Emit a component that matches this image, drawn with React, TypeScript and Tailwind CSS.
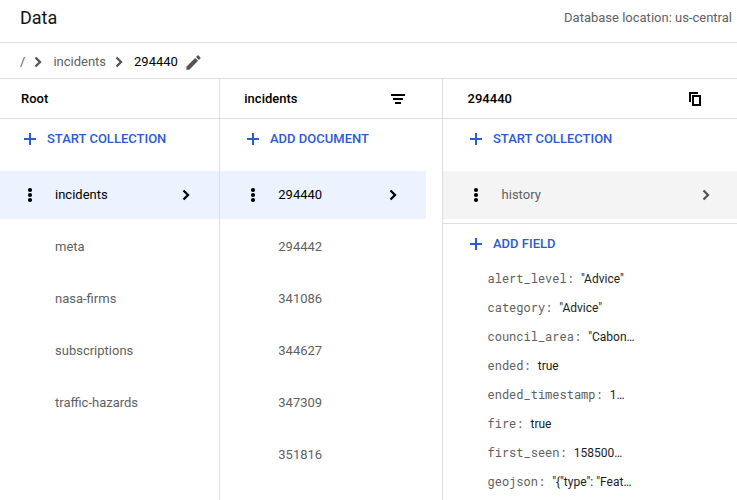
import React from "react";

type IconProps = { className?: string };

const Chevron = ({ className = "" }: IconProps) => (
  <svg viewBox="0 0 20 20" className={`size-5 shrink-0 ${className}`} fill="none" stroke="currentColor" strokeWidth="2.3">
    <path d="M7.5 5.5 12 10l-4.5 4.5" />
  </svg>
);

const Plus = () => (
  <svg viewBox="0 0 20 20" className="size-5 shrink-0" fill="currentColor" shapeRendering="crispEdges">
    <path d="M4 9h5V4h2v5h5v2h-5v5H9v-5H4z" />
  </svg>
);

const Dots = () => (
  <svg viewBox="0 0 20 20" className="size-5 shrink-0 text-black" fill="currentColor">
    <circle cx="10" cy="5" r="2.1" />
    <circle cx="10" cy="10" r="2.1" />
    <circle cx="10" cy="15" r="2.1" />
  </svg>
);

const Pencil = () => (
  <svg viewBox="0 0 24 24" className="ml-1.5 size-[19px] shrink-0 text-[#545454]" fill="currentColor">
    <path d="M3 17.25V21h3.75L17.81 9.94l-3.75-3.75L3 17.25zM20.71 7.04a1 1 0 0 0 0-1.41l-2.34-2.34a1 1 0 0 0-1.41 0l-1.83 1.83 3.75 3.75 1.83-1.83z" />
  </svg>
);

const Filter = () => (
  <svg viewBox="0 0 14 10" className="h-2.5 w-3.5 shrink-0" fill="currentColor" shapeRendering="crispEdges">
    <path d="M0 0h14v2H0zM2 4h10v2H2zM4 8h6v2H4z" />
  </svg>
);

const Copy = () => (
  <svg viewBox="0 0 12 14" className="h-3.5 w-3 shrink-0" fill="none" stroke="currentColor" strokeWidth="2" shapeRendering="crispEdges">
    <path d="M1 10V1H9M4 4h7v9H4z" />
  </svg>
);

function Action({ label }: { label: string }) {
  return (
    <button className="flex h-10 items-center pl-5 text-left text-[13px] font-medium text-[#2b5bd0]">
      <Plus />
      <span className="ml-[7px]">{label}</span>
    </button>
  );
}

function ListItem({ label }: { label: string }) {
  return <div className="flex h-[52px] items-center text-[13px] text-[#5f5f5f]">{label}</div>;
}

const collections = ["meta", "nasa-firms", "subscriptions", "traffic-hazards"];
const documents = ["294442", "341086", "344627", "347309", "351816"];
const fields = [
  ["alert_level", '"Advice"'],
  ["category", '"Advice"'],
  ["council_area", '"Cabon…'],
  ["ended", "true"],
  ["ended_timestamp", "1…"],
  ["fire", "true"],
  ["first_seen", "158500…"],
  ["geojson", '"{"type": "Feat…'],
];

export default function App() {
  return (
    <div className="flex h-[500px] w-[737px] flex-col overflow-hidden bg-white font-['Roboto',sans-serif] text-[13px] text-black">
      <header className="flex h-[43px] shrink-0 items-center justify-between border-b border-[#dedede] pb-[7px] pl-5 pr-[5px]">
        <h1 className="text-[18px] text-[#141414]">Data</h1>
        <span className="text-[#616161]">Database location: us-central</span>
      </header>
      <nav className="flex h-9 shrink-0 items-center border-b border-[#dedede] pl-5 pt-[3px] text-[#5f5f5f]">
        <span>/</span>
        <Chevron className="ml-[3px] text-[#545454]" />
        <span className="ml-[5px]">incidents</span>
        <Chevron className="ml-[3px] text-[#545454]" />
        <span className="ml-[5px] text-black">294440</span>
        <Pencil />
      </nav>
      <main className="flex min-h-0 flex-1">
        <section className="flex w-[220px] shrink-0 flex-col border-r border-[#dedede]">
          <div className="flex h-10 shrink-0 items-center border-b border-[#dedede] pl-[21px] font-medium">Root</div>
          <Action label="START COLLECTION" />
          <div className="mt-3 flex h-12 shrink-0 items-center bg-[#ecf3fe] pl-5">
            <Dots />
            <span className="ml-[15px] flex-1">incidents</span>
            <Chevron className="mr-[23px]" />
          </div>
          <div className="mt-0.5 pl-[55px]">
            {collections.map((name) => <ListItem key={name} label={name} />)}
          </div>
        </section>
        <section className="flex w-[223px] shrink-0 flex-col border-r border-[#dedede]">
          <div className="flex h-10 shrink-0 items-center justify-between border-b border-[#dedede] pl-[24.3px] pr-[37px] font-medium">
            incidents
            <Filter />
          </div>
          <div className="pl-[3px]"><Action label="ADD DOCUMENT" /></div>
          <div className="mr-4 mt-3 flex h-12 shrink-0 items-center bg-[#ecf3fe] pl-[23px]">
            <Dots />
            <span className="ml-[15.3px] flex-1">294440</span>
            <Chevron className="mr-[23px]" />
          </div>
          <div className="mt-0.5 pl-[58.3px]">
            {documents.map((id) => <ListItem key={id} label={id} />)}
          </div>
        </section>
        <section className="flex min-w-0 flex-1 flex-col">
          <div className="flex h-10 shrink-0 items-center justify-between border-b border-[#dedede] pl-[24.6px] pr-9 font-medium">
            294440
            <Copy />
          </div>
          <div className="pl-[3px]"><Action label="START COLLECTION" /></div>
          <div className="mt-3 flex h-12 shrink-0 items-center bg-[#f4f4f4] pl-[23px]">
            <Dots />
            <span className="ml-[15.6px] flex-1 text-[#5f5f5f]">history</span>
            <Chevron className="mr-[21px] text-[#545454]" />
          </div>
          <div className="mt-1 border-t border-[#dedede] pl-[3px]"><Action label="ADD FIELD" /></div>
          <div className="pl-[44.5px] text-[12px]">
            {fields.map(([key, value]) => (
              <div key={key} className="flex h-[29px] items-center whitespace-pre">
                <span className="pb-0.5 font-['Roboto_Mono','Liberation_Mono',monospace] text-[#606060]">{key}:</span>
                <span className="ml-[7px] text-[#1c1c1c]">{value}</span>
              </div>
            ))}
          </div>
        </section>
      </main>
    </div>
  );
}
